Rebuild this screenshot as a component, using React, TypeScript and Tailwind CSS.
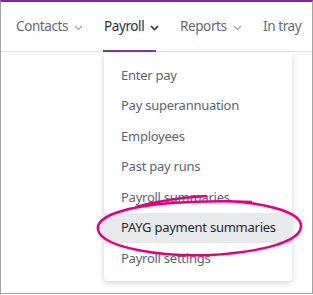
import React from 'react';

const navItems = [
    { label: 'Contacts', active: false, chevron: true, width: 'w-[88px]' },
    { label: 'Payroll', active: true, chevron: true, width: 'w-[76px]' },
    { label: 'Reports', active: false, chevron: true, width: 'w-[83px]' },
    { label: 'In tray', active: false, chevron: false, width: 'w-[45px]' },
];

const menuItems = [
    'Enter pay',
    'Pay superannuation',
    'Employees',
    'Past pay runs',
    'Payroll summaries',
    'PAYG payment summaries',
    'Payroll settings',
];

const Chevron = ({ dark }: { dark?: boolean }) => (
    <svg width="9" height="6" viewBox="0 0 9 6" className="ml-[6px] mt-[2px]">
        <path d="M1 1l3.5 3.5L8 1" fill="none" stroke={dark ? '#2b3440' : '#9aa3ad'} strokeWidth={dark ? 1.6 : 1.2} />
    </svg>
);

const App = () => {
    return (
        <div className="w-[313px] h-[295px] bg-white" style={{ fontFamily: '"Noto Sans", "Open Sans", sans-serif' }}>
            <div className="relative w-[313px] h-[294px] overflow-hidden border-x border-b border-[#a3a3a3] border-t-2 border-t-[#7b2c8f]">
                {/* Nav */}
                <div className="flex h-[50px] items-center border-b border-[#e3e5e8] pl-[15px]">
                    {navItems.map((item) => (
                        <div
                            key={item.label}
                            className={`relative flex h-full shrink-0 items-center whitespace-nowrap text-[13.5px] tracking-[-0.4px] ${item.width} ${item.active ? 'text-[#27323d]' : 'text-[#5f6b77]'}`}
                        >
                            {item.label}
                            {item.chevron && <Chevron dark={item.active} />}
                            {item.active && (
                                <div className="absolute -left-[1px] -bottom-[1px] h-[2px] w-[53px] bg-[#7c3aa8]" />
                            )}
                        </div>
                    ))}
                </div>

                {/* Dropdown */}
                <div className="absolute left-[103px] top-[51px] w-[188px] bg-white rounded-b-[4px] shadow-[0_2px_6px_rgba(0,0,0,0.18)] py-[7px]">
                    {menuItems.map((item) => (
                        <div
                            key={item}
                            className={`h-[30.5px] flex items-center pl-[17px] text-[13px] tracking-[-0.25px] ${item === 'PAYG payment summaries' ? 'bg-[#e8e9eb] text-[#1f2a35]' : 'text-[#5b6570]'}`}
                        >
                            {item}
                        </div>
                    ))}
                </div>

                {/* Hand-drawn highlight */}
                <svg className="absolute left-0 top-0 pointer-events-none" width="313" height="295" viewBox="0 0 313 295">
                    <path
                        d="M135 205 C160 198 185 195 205 194 M225 199 C265 201 300 210 300 224 C300 240 260 250 210 253 C160 255 102 246 97 228 C94 213 130 204 170 201 C200 199 230 199 250 200"
                        fill="none"
                        stroke="#e6007e"
                        strokeWidth="2.6"
                        strokeLinecap="round"
                    />
                </svg>
            </div>
        </div>
    );
};

export default App;
